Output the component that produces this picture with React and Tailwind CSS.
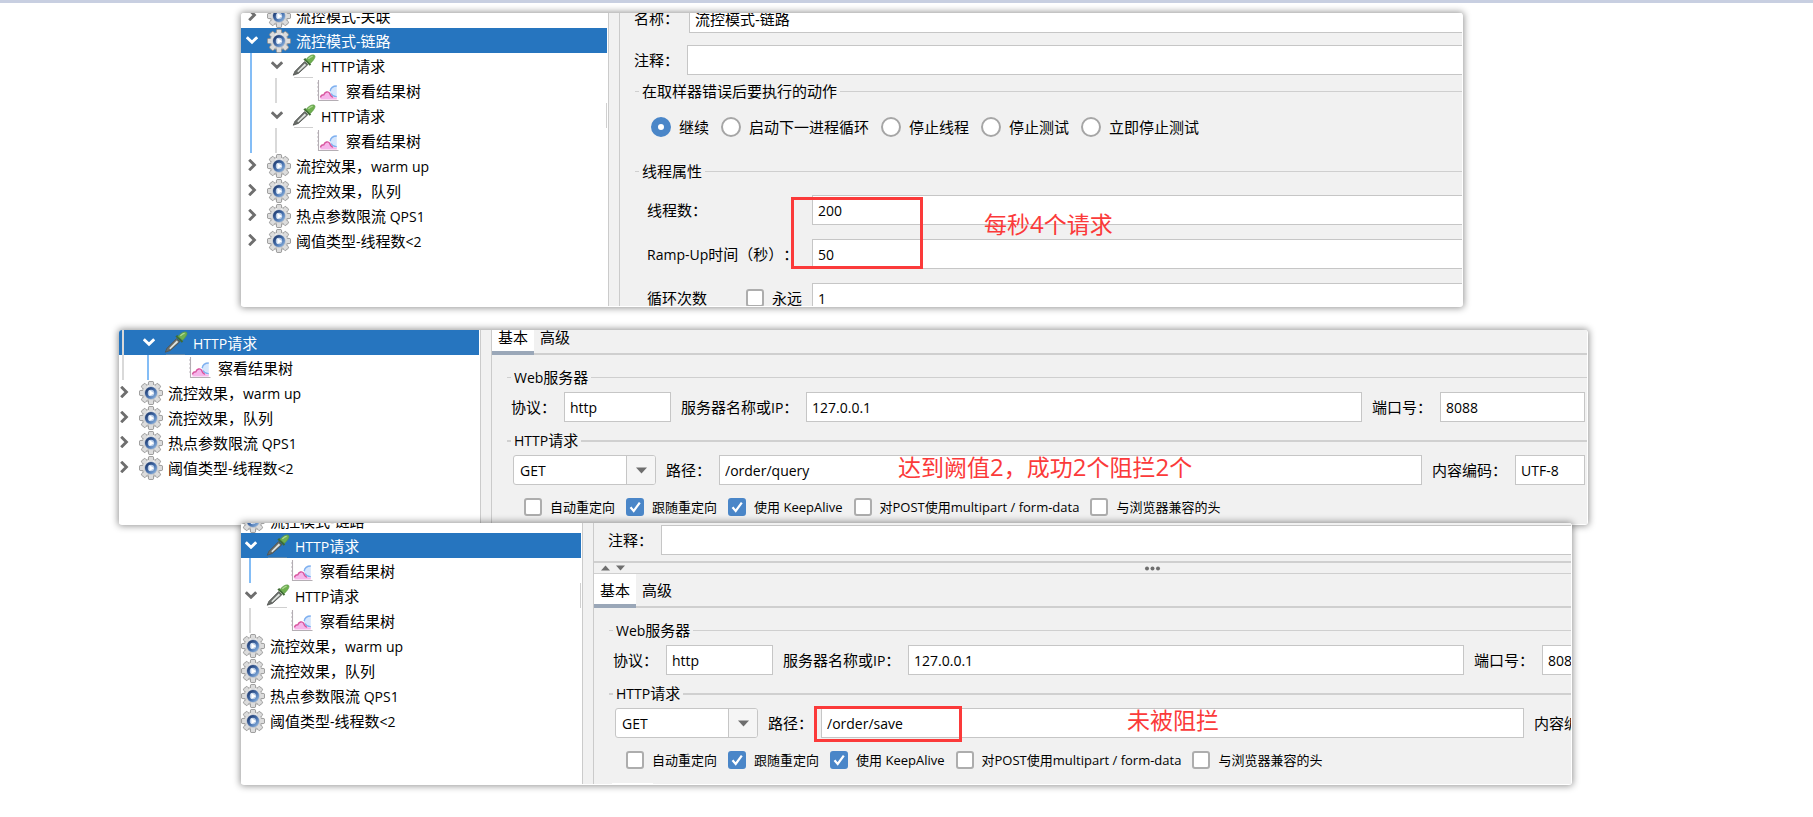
import React, { useId } from "react";

/* ---------- text ---------- */

// Latin runs are set slightly smaller than the CJK text around them.
function Mixed({ text, latin = "text-[14px]" }) {
  return text.split(/([\x20-\x7e]+)/).map((part, i) =>
    i % 2 ? (
      <span key={i} className={latin}>
        {part}
      </span>
    ) : (
      part
    )
  );
}

/* ---------- icons ---------- */

function Chevron({ open }) {
  return (
    <svg width="12" height="12" viewBox="0 0 12 12" fill="none" stroke="currentColor" strokeWidth="2.9">
      {open ? <path d="M.8 3.200 6 8.200 11.200 3.200" /> : <path d="M3.200.8 8.400 6 3.200 11.200" />}
    </svg>
  );
}

function GearIcon() {
  const teeth = [0, 45, 90, 135, 180, 225, 270, 315];
  return (
    <svg width="24" height="24" viewBox="0 0 24 24" className="shrink-0">
      <defs>
        <linearGradient id="gearBody" x1="0" y1="0" x2="0" y2="1">
          <stop offset="0" stopColor="#f4f4f4" />
          <stop offset="1" stopColor="#bdbdbd" />
        </linearGradient>
        <linearGradient id="gearRing" x1="0" y1="0" x2="1" y2="1">
          <stop offset="0" stopColor="#1f3a6e" />
          <stop offset="0.55" stopColor="#4670ad" />
          <stop offset="1" stopColor="#86aedb" />
        </linearGradient>
      </defs>
      {teeth.map((a) => (
        <rect key={a} x="9.4" y="0.4" width="5.2" height="6" rx="1.4" fill="#d6d6d6" stroke="#8f8f8f" strokeWidth="0.9" transform={`rotate(${a} 12 12)`} />
      ))}
      <circle cx="12" cy="12" r="8.8" fill="url(#gearBody)" stroke="#9c9c9c" strokeWidth="0.8" />
      {teeth.map((a) => (
        <rect key={a} x="10" y="1.4" width="4" height="4.2" fill="#dcdcdc" transform={`rotate(${a} 12 12)`} />
      ))}
      <circle cx="12" cy="12" r="6.500" fill="#a9b6cb" />
      <circle cx="12" cy="12" r="4.600" fill="#b9cde8" stroke="url(#gearRing)" strokeWidth="2.800" />
      <path d="M10.400 9 15 12.200 10.400 15z" fill="#ffffff" />
    </svg>
  );
}

function DropperIcon() {
  return (
    <svg width="24" height="24" viewBox="0 0 24 24" className="shrink-0">
      <path d="M2 23.500h19" stroke="#9a9a9a" strokeWidth="0.8" opacity="0.6" />
      <path d="M1.200 21.200 3 17.200 12.600 7.600l3.200 3.200-9.400 8.600z" fill="#6a6e6a" stroke="#4f524f" strokeWidth="0.8" />
      <path d="M5.200 17.200 12.800 9.600l1.400 1.300-7.800 7.400z" fill="#dfe4e0" />
      <path d="m11.400 5.600 6.400 6.200 1.400-1.600-6-6.200z" fill="#3f6b34" />
      <path d="M14 5.400C16.400 2.600 19.400.4 22 1c1.800.800 1.400 3.400-3.400 8.200z" fill="#6fb04f" stroke="#5c9a47" strokeWidth="0.7" />
      <path d="M16.400 4.800c1.600-1.600 3-2.400 4.200-2.400" stroke="#b5dc9c" strokeWidth="1.200" fill="none" />
    </svg>
  );
}

function ChartIcon() {
  return (
    <svg width="24" height="24" viewBox="0 0 24 24" className="shrink-0">
      <path d="M12.800 12.600C13.200 9.600 16 7 19.800 7v11c-3 0-5-1-7-5.400z" fill="#d5e6fd" />
      <path d="M19.800 7c-3.600 0-6.200 2-6.600 5.200M14 14.500c1.400 2.400 3.200 3.400 5.800 3.200" fill="none" stroke="#7fb0f0" strokeWidth="1.400" />
      <path d="M3.400 20.500c0-3.500 1.600-4.500 3.400-4.800C8 12.800 11 11.500 12.600 14c.8 2.600 2.600 4.400 7.200 4.500v2z" fill="#f6b4ea" />
      <path d="M3.400 18.500c.4-2 1.600-2.800 3.400-2.800 1.200-2.900 4.200-3.800 5.800-1.500.6 2.200 1.600 3.400 3.200 4.200" fill="none" stroke="#d8559f" strokeWidth="1.400" />
      <path d="M1.500 1v20.500h20" fill="none" stroke="#b4aeb4" strokeWidth="1.100" />
      <path d="M0 4h1.500M0 8h1.500M0 12h1.500M0 16h1.500" stroke="#b4aeb4" strokeWidth="0.900" />
    </svg>
  );
}

const ICONS = { gear: GearIcon, http: DropperIcon, chart: ChartIcon };

/* ---------- tree ---------- */

const GUIDE = { blue: "bg-[#84bdf6]", grey: "bg-[#d9d9d9]" };

function TreeRow({ icon, label, guides = [], open, leaf, selected, mark }) {
  const Icon = ICONS[icon];
  return (
    <li className={`flex h-[25px] items-center whitespace-nowrap ${selected ? "bg-[#2675bf] text-white" : ""}`}>
      {guides.map((g, i) => (
        <span key={i} className="h-full w-[25px] shrink-0 pl-[9px]">
          <span className={`block h-full w-[2px] ${GUIDE[g]}`} />
        </span>
      ))}
      {leaf ? (
        <span className="w-[26px] shrink-0" />
      ) : (
        <button
          type="button"
          aria-label={label}
          className={`flex w-[26px] shrink-0 pb-[2px] pl-[5px] ${selected ? "text-white" : "text-[#6e6e6e]"}`}
        >
          <Chevron open={open} />
        </button>
      )}
      <Icon />
      <span className="pl-[5px] pt-px">
        <Mixed text={label} />
      </span>
      {mark && <span className="ml-auto h-full w-px bg-[#d0d0d0]" />}
    </li>
  );
}

function Tree({ rows, className, listClass }) {
  return (
    <div className={`shrink-0 overflow-hidden border-r border-[#cbcbcb] bg-white pr-px ${className}`}>
      <ul className={listClass}>
        {rows.map((r, i) => (
          <TreeRow key={i} {...r} />
        ))}
      </ul>
    </div>
  );
}

function Splitter() {
  return <div className="w-[11px] shrink-0 border-r border-[#cbcbcb] bg-[#f1f1f1]" />;
}

/* ---------- form parts ---------- */

const FIELD = "h-[30px] min-w-0 rounded-none border border-[#c6c6c6] bg-white px-[5px] outline-none";

function Field({ label, value, labelClass, inputClass, size = "text-[14px]" }) {
  const id = useId();
  return (
    <>
      <label htmlFor={id} className={`shrink-0 whitespace-nowrap pt-px ${labelClass}`}>
        <Mixed text={label} />
      </label>
      <input id={id} type="text" defaultValue={value} className={`${FIELD} ${size} ${inputClass}`} />
    </>
  );
}

function Group({ title, thick, className, children }) {
  const line = thick ? "h-[2px] bg-[#d0d0d0]" : "h-px bg-[#cfcfcf]";
  return (
    <fieldset className={`min-w-0 ${className}`}>
      <legend className="flex h-[21px] w-full items-center gap-[3px] pl-[15px]">
        <span className={`w-1 ${line}`} />
        <span className="whitespace-nowrap">
          <Mixed text={title} />
        </span>
        <span className={`flex-1 ${line}`} />
      </legend>
      {children}
    </fieldset>
  );
}

function Check({ label, checked, small }) {
  return (
    <label className={`flex shrink-0 items-center gap-2 whitespace-nowrap ${small ? "text-[13px]" : ""}`}>
      <span className="grid">
        <input
          type="checkbox"
          defaultChecked={checked}
          className="peer size-[18px] appearance-none rounded-[3px] border-2 border-[#adadad] bg-white [grid-area:1/1] checked:border-[#4a86c8] checked:bg-[#4a86c8]"
        />
        <svg viewBox="0 0 18 18" className="pointer-events-none hidden size-[18px] [grid-area:1/1] peer-checked:block">
          <path d="M4.500 9.200 7.700 13 13.800 4.600" fill="none" stroke="#fff" strokeWidth="2.200" />
        </svg>
      </span>
      <span>
        <Mixed text={label} latin={small ? "text-[13px]" : "text-[14px]"} />
      </span>
    </label>
  );
}

function Radio({ label, checked }) {
  return (
    <label className="flex shrink-0 items-center gap-2 whitespace-nowrap">
      <input
        type="radio"
        name="on-error"
        defaultChecked={checked}
        className="size-5 appearance-none rounded-full border-2 border-[#a6a6a6] bg-white checked:border-[7px] checked:border-[#4a86c8]"
      />
      {label}
    </label>
  );
}

function Tabs() {
  return (
    <div role="tablist" className="flex h-[34px] border-b-2 border-[#cfcfcf]">
      <button type="button" role="tab" aria-selected="true" className="-mb-[2px] border-b-4 border-[#9aa7b8] bg-white px-[6px] pt-[2px]">
        基本
      </button>
      <button type="button" role="tab" aria-selected="false" className="px-[6px] pt-px">
        高级
      </button>
    </div>
  );
}

function HttpForm({ path }) {
  return (
    <div>
      <Tabs />
      <Group title="Web服务器" className="mt-3">
        <div className="mt-1 flex items-center pl-[19px] pr-[23px]">
          <Field label="协议：" value="http" labelClass="w-[53px]" inputClass="w-[107px]" />
          <Field label="服务器名称或IP：" value="127.0.0.1" labelClass="ml-[10px] w-[125px]" inputClass="flex-1" />
          <Field label="端口号：" value="8088" labelClass="ml-[10px] w-[68px]" inputClass="w-[145px]" />
        </div>
      </Group>
      <Group title="HTTP请求" thick className="mt-2">
        <div className="mt-1 flex items-center pl-[21px] pr-[23px]">
          <div className="relative w-[143px] shrink-0">
            <select
              aria-label="Method"
              defaultValue="GET"
              className="block h-[30px] w-full appearance-none rounded-[3px] border border-[#c6c6c6] bg-white pl-[6px] text-[14px] outline-none"
            >
              <option>GET</option>
            </select>
            <span className="pointer-events-none absolute inset-y-px right-px flex w-[29px] items-center justify-center rounded-r-[2px] border-l border-[#c6c6c6] bg-[#f5f5f5]">
              <svg width="11" height="7" viewBox="0 0 11 7">
                <path d="M0 .5h11L5.500 6.500z" fill="#6e6e6e" />
              </svg>
            </span>
          </div>
          <Field label="路径：" value={path} labelClass="ml-[10px] w-[53px]" inputClass="flex-1" />
          <Field label="内容编码：" value="UTF-8" labelClass="ml-[10px] w-[83px]" inputClass="w-[70px]" />
        </div>
        <div className="mt-[13px] flex h-[18px] gap-[11px] pl-8">
          <Check small label="自动重定向" />
          <Check small label="跟随重定向" checked />
          <Check small label="使用 KeepAlive" checked />
          <Check small label="对POST使用multipart / form-data" />
          <Check small label="与浏览器兼容的头" />
        </div>
      </Group>
    </div>
  );
}

/* ---------- panels and annotations ---------- */

function Panel({ className, children }) {
  return (
    <section
      className={`relative flex overflow-hidden rounded-[3px] bg-white pb-px pr-px shadow-[0_0_7px_1px_rgba(0,0,0,0.42)] ${className}`}
    >
      {children}
    </section>
  );
}

function Note({ className, text }) {
  return (
    <p className={`pointer-events-none absolute whitespace-nowrap text-[23px] leading-7 text-[#fb3a3a] ${className}`}>
      <Mixed text={text} latin="text-[24px]" />
    </p>
  );
}

function RedBox({ className }) {
  return <div className={`pointer-events-none absolute border-[3px] border-[#fb3a3a] ${className}`} />;
}

/* ---------- data ---------- */

const planRows = (leaf) => [
  { icon: "gear", label: "流控效果，warm up", leaf },
  { icon: "gear", label: "流控效果，队列", leaf },
  { icon: "gear", label: "热点参数限流 QPS1", leaf },
  { icon: "gear", label: "阈值类型-线程数<2", leaf },
];

const TREE_1 = [
  { icon: "gear", label: "流控模式-关联" },
  { icon: "gear", label: "流控模式-链路", open: true, selected: true },
  { icon: "http", label: "HTTP请求", open: true, guides: ["blue"] },
  { icon: "chart", label: "察看结果树", leaf: true, guides: ["blue", "grey"] },
  { icon: "http", label: "HTTP请求", open: true, guides: ["blue"], mark: true },
  { icon: "chart", label: "察看结果树", leaf: true, guides: ["blue", "grey"] },
  ...planRows(false),
];

const TREE_2 = [
  { icon: "http", label: "HTTP请求", open: true, selected: true, guides: ["grey"] },
  { icon: "chart", label: "察看结果树", leaf: true, guides: ["grey", "blue"] },
  ...planRows(false),
];

const TREE_3 = [
  { icon: "gear", label: "流控模式-链路", leaf: true },
  { icon: "http", label: "HTTP请求", open: true, selected: true, guides: ["grey"] },
  { icon: "chart", label: "察看结果树", leaf: true, guides: ["grey", "blue"] },
  { icon: "http", label: "HTTP请求", open: true, guides: ["grey"], mark: true },
  { icon: "chart", label: "察看结果树", leaf: true, guides: ["grey", "grey"] },
  ...planRows(true),
];

/* ---------- page ---------- */

export default function App() {
  return (
    <main
      lang="zh-CN"
      className="min-h-screen overflow-hidden border-t-[3px] border-[#c8cfe1] bg-white pt-[10px] font-['Open_Sans','Noto_Sans_CJK_SC',sans-serif] text-[15px] leading-[21px] text-black [text-spacing-trim:space-all]"
    >
      <Panel className="ml-[241px] mr-[350px]">
        <Tree rows={TREE_1} className="w-[368px]" listClass="-mt-[10px]" />
        <Splitter />
        <div className="min-w-0 flex-1 overflow-hidden bg-[#f1f1f1]">
          <div className="-mb-[7px] -mr-1 -mt-[10px]">
            <div className="flex items-center pl-[14px]">
              <Field label="名称：" value="流控模式-链路" labelClass="w-[55px]" inputClass="flex-1" size="text-[15px]" />
            </div>
            <div className="mt-3 flex items-center pl-[14px]">
              <Field label="注释：" value="" labelClass="w-[53px]" inputClass="flex-1" />
            </div>
            <Group title="在取样器错误后要执行的动作" className="mt-[6px]">
              <div className="mt-[15px] flex h-5 items-center gap-3 pl-[31px]">
                <Radio label="继续" checked />
                <Radio label="启动下一进程循环" />
                <Radio label="停止线程" />
                <Radio label="停止测试" />
                <Radio label="立即停止测试" />
              </div>
            </Group>
            <Group title="线程属性" className="mt-6">
              <div className="mt-[13px] flex flex-col gap-[14px] pl-[27px]">
                <div className="flex items-center">
                  <Field label="线程数：" value="200" labelClass="w-[165px]" inputClass="flex-1" />
                </div>
                <div className="flex items-center">
                  <Field label="Ramp-Up时间（秒）：" value="50" labelClass="w-[165px]" inputClass="flex-1" />
                </div>
                <div className="flex items-center">
                  <label htmlFor="loops" className="w-[99px] shrink-0">
                    循环次数
                  </label>
                  <div className="w-[66px] shrink-0">
                    <Check label="永远" />
                  </div>
                  <input id="loops" type="text" defaultValue="1" className={`${FIELD} flex-1 text-[14px]`} />
                </div>
              </div>
            </Group>
          </div>
        </div>
        <RedBox className="left-[550px] top-[184px] h-[72px] w-[132px]" />
        <Note className="left-[743px] top-[197px]" text="每秒4个请求" />
      </Panel>

      <Panel className="ml-[119px] mr-[225px] mt-[23px]">
        <Tree rows={TREE_2} className="w-[362px]" listClass="-ml-[6px]" />
        <Splitter />
        <div className="min-w-0 flex-1 overflow-hidden bg-[#f1f1f1]">
          <div className="-mr-[21px] -mt-[9px] pb-2">
            <HttpForm path="/order/query" />
          </div>
        </div>
        <Note className="left-[779px] top-[123px]" text="达到阙值2，成功2个阻拦2个" />
      </Panel>

      <Panel className="-mt-[2px] ml-[241px] mr-[241px]">
        <Tree rows={TREE_3} className="w-[342px]" listClass="-ml-[26px] -mt-[15px]" />
        <Splitter />
        <div className="min-w-0 flex-1 overflow-hidden bg-[#f1f1f1]">
          <div className="-mr-[139px] pt-[2px]">
            <div className="flex items-center pl-[14px]">
              <Field label="注释：" value="" labelClass="w-[53px]" inputClass="flex-1" />
            </div>
            <div className="mt-[6px] grid h-[13px] grid-cols-3 items-center border-b border-t-2 border-[#cfcfcf]">
              <div className="flex gap-1 pl-[6px] text-[#6e6e6e]">
                <button type="button" aria-label="Collapse">
                  <svg width="11" height="6" viewBox="0 0 11 6" className="block">
                    <path d="M1 5.500h9L5.500.5z" fill="currentColor" />
                  </svg>
                </button>
                <button type="button" aria-label="Expand">
                  <svg width="11" height="6" viewBox="0 0 11 6" className="block">
                    <path d="M1 .5h9L5.500 5.500z" fill="currentColor" />
                  </svg>
                </button>
              </div>
              <svg width="17" height="5" viewBox="0 0 17 5" className="justify-self-center" fill="#6e6e6e">
                <circle cx="3" cy="2.500" r="2" />
                <circle cx="8.500" cy="2.500" r="2" />
                <circle cx="14" cy="2.500" r="2" />
              </svg>
            </div>
            <HttpForm path="/order/save" />
            <div className="ml-[18px] mt-[14px] h-px w-[41px] bg-white" />
          </div>
        </div>
        <RedBox className="left-[573px] top-[183px] h-[36px] w-[148px]" />
        <Note className="left-[886px] top-[183px]" text="未被阻拦" />
      </Panel>
    </main>
  );
}
